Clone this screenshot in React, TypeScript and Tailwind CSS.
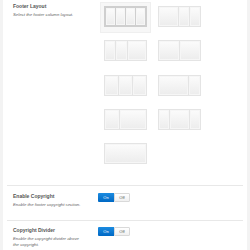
const layouts: { cols: string[]; selected?: boolean }[] = [
  { cols: ["flex-[1]", "flex-[1]", "flex-[1]", "flex-[1]"], selected: true },
  { cols: ["flex-[2]", "flex-[1]", "flex-[1]"] },
  { cols: ["flex-[1]", "flex-[1]", "flex-[2]"] },
  { cols: ["flex-[1]", "flex-[1]"] },
  { cols: ["flex-[1]", "flex-[1]", "flex-[1]"] },
  { cols: ["flex-[3]", "flex-[1]"] },
  { cols: ["flex-[1]", "flex-[2]"] },
  { cols: ["flex-[1]", "flex-[2]", "flex-[1]"] },
  { cols: ["flex-[1]"] },
];

function LayoutBox({ cols, selected }: { cols: string[]; selected?: boolean }) {
  return (
    <div
      className={
        selected
          ? "w-[51px] h-[31px] pt-[3px] pl-[3px] bg-[#f7f7f7] border border-[#efefef]"
          : "w-[51px] h-[31px] pt-[4px] pl-[4px]"
      }
    >
      <div
        className={
          selected
            ? "w-[43px] h-[21px] flex gap-px p-[2px] bg-[#cfcfcf]"
            : "w-[43px] h-[21px] flex gap-px p-px bg-[#e4e4e4]"
        }
      >
        {cols.map((c, i) => (
          <div
            key={i}
            className={`${c} bg-linear-to-b from-[#fbfbfb] to-[#ededed] border border-[#f6f6f6]`}
          />
        ))}
      </div>
    </div>
  );
}

function Toggle() {
  return (
    <div className="flex h-[9px] w-[32px] text-[4px] leading-[9px]">
      <div className="w-[16px] bg-linear-to-b from-[#1b8be0] to-[#0068c4] text-white text-center rounded-l-[1px]">
        On
      </div>
      <div className="w-[16px] bg-linear-to-b from-[#ffffff] to-[#f0f0f0] border border-[#d9d9d9] text-[#555] text-center leading-[7px] rounded-r-[1px]">
        Off
      </div>
    </div>
  );
}

function Label({ title, desc }: { title: string; desc: string }) {
  return (
    <div className="w-[95px] pl-[10px] pr-[12px]">
      <div className="text-[5px] leading-[7px] font-bold text-[#555]">{title}</div>
      <div className="mt-[2px] text-[4.3px] leading-[6px] italic text-[#666]">{desc}</div>
    </div>
  );
}

export default function App() {
  return (
    <div className="flex w-[250px] h-[250px] overflow-hidden bg-white font-['Liberation_Sans',Arial,sans-serif]">
      <div className="w-[3px] bg-[#f3f3f3]" />
      <div className="flex-1 flex flex-col">
        <div className="flex pt-[2px] pb-[15px]">
          <div className="pt-px">
            <Label title="Footer Layout" desc="Select the footer column layout." />
          </div>
          <div className="ml-[2px] grid grid-cols-[51px_51px] gap-x-[3px] gap-y-[3.25px]">
            {layouts.map((l, i) => (
              <LayoutBox key={i} cols={l.cols} selected={l.selected} />
            ))}
          </div>
        </div>
        <div className="mx-[4px] h-px bg-[#e8e8e8]" />
        <div className="flex pt-[7px] h-[34px]">
          <Label title="Enable Copyright" desc="Enable the footer copyright section." />
          <Toggle />
        </div>
        <div className="mx-[4px] h-px bg-[#e8e8e8]" />
        <div className="flex pt-[6px]">
          <Label
            title="Copyright Divider"
            desc="Enable the copyright divider above the copyright."
          />
          <Toggle />
        </div>
      </div>
      <div className="w-[3px] bg-[#f3f3f3]" />
    </div>
  );
}
